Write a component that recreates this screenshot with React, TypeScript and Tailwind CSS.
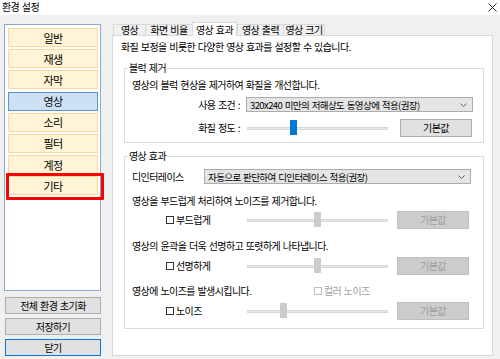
import React from 'react';

const navItems = ['일반', '재생', '자막', '영상', '소리', '필터', '계정', '기타'];
const tabs = [
  { label: '영상', w: 'w-[32px]' },
  { label: '화면 비율', w: 'w-[47px]' },
  { label: '영상 효과', w: 'w-[45px]', active: true },
  { label: '영상 출력', w: 'w-[46px]' },
  { label: '영상 크기', w: 'w-[42px]' },
];

function Chevron() {
  return (
    <svg width="7" height="4" viewBox="0 0 7 4" fill="none">
      <path d="M0.5 0.5 L3.5 3.5 L6.5 0.5" stroke="#606060" strokeWidth="1" />
    </svg>
  );
}

function Combo({ text, width }: { text: string; width: string }) {
  return (
    <div className={`${width} h-[15px] bg-[#e5e5e5] border border-[#acacac] flex items-center justify-between pl-[3px] pr-[5px]`}>
      <span className="text-[9.5px] tracking-[-0.6px]">{text}</span>
      <Chevron />
    </div>
  );
}

function Slider({ pos, disabled }: { pos: number; disabled?: boolean }) {
  return (
    <div className="relative w-[141px] h-[18px] flex items-center">
      <div className="w-full h-[3px] bg-[#e7eaea] border border-[#d6d6d6]" />
      <div
        className={`absolute top-[1px] w-[7px] h-[15px] ${disabled ? 'bg-[#cccccc]' : 'bg-[#0078d7]'}`}
        style={{ left: pos }}
      />
    </div>
  );
}

function DefaultButton({ disabled, ml }: { disabled?: boolean; ml: string }) {
  return (
    <div
      className={`${ml} w-[72px] h-[18px] flex items-center justify-center border ${
        disabled ? 'bg-[#cccccc] border-[#bfbfbf] text-[#9d9d9d]' : 'bg-[#e1e1e1] border-[#adadad]'
      }`}
    >
      기본값
    </div>
  );
}

function Check({ label, disabled }: { label: string; disabled?: boolean }) {
  return (
    <div className={`flex items-center ${disabled ? 'text-[#a0a0a0]' : ''}`}>
      <div className={`w-[8px] h-[8px] bg-white border ${disabled ? 'border-[#bcbcbc]' : 'border-[#333333]'}`} />
      <span className="ml-[2px]">{label}</span>
    </div>
  );
}

function EffectRow({ label, pos }: { label: string; pos: number }) {
  return (
    <div className="flex items-center h-[18px]">
      <div className="w-[122px] pl-[41px]">
        <Check label={label} />
      </div>
      <Slider pos={pos} disabled />
      <DefaultButton disabled ml="ml-[9px]" />
    </div>
  );
}

function GroupBox({ title, className, children }: { title: string; className: string; children: React.ReactNode }) {
  return (
    <div className={`relative ml-[11px] w-[360px] border border-[#dcdcdc] ${className}`}>
      <span className="absolute left-[3px] top-[-8px] bg-white px-[1px] leading-[14px]">{title}</span>
      {children}
    </div>
  );
}

export default function App() {
  return (
    <div className="w-[500px] h-[359px] bg-[#f0f0f0] overflow-hidden text-black font-['Noto_Sans_CJK_KR','Noto_Sans',sans-serif] text-[10px] tracking-[-0.6px] [word-spacing:1px] leading-[14px]">
      <div className="h-[15px] bg-white flex items-start justify-between pl-[2px] pr-[3px]">
        <span className="leading-[12px] mt-[1px]">환경 설정</span>
        <svg width="9" height="9" viewBox="0 0 9 9" className="mt-[3px]">
          <path d="M0.5 0.5 L8.5 8.5 M8.5 0.5 L0.5 8.5" stroke="#222" strokeWidth="1" />
        </svg>
      </div>

      <div className="flex items-start pt-[7px]">
        {/* left navigation */}
        <div className="ml-[4px] w-[97px] mt-[2px]">
          <div className="h-[267px] bg-white border border-[#8fa9cc] pt-[3px] pl-[3px] pr-[2px] flex flex-col gap-[2.2px]">
            {navItems.map((item) => (
              <div key={item} className="relative">
                <div
                  className={`h-[19px] flex items-center justify-center border text-[11px] ${
                    item === '영상' ? 'bg-[#cce0f6] border-[#5e93d2]' : 'bg-[#fff4d6] border-[#fbd99e]'
                  }`}
                >
                  {item}
                </div>
                {item === '기타' && (
                  <div className="absolute left-[-2px] right-[-6px] top-[-3px] bottom-[-5px] border-[3px] border-[#ff0000] rounded-[1px]" />
                )}
              </div>
            ))}
          </div>
          <div className="ml-[1px] w-[96px] mt-[6px] flex flex-col gap-[4px]">
            <div className="h-[17px] flex items-center justify-center bg-[#e1e1e1] border border-[#adadad]">전체 환경 초기화</div>
            <div className="h-[17px] flex items-center justify-center bg-[#e1e1e1] border border-[#adadad]">저장하기</div>
            <div className="h-[17px] flex items-center justify-center bg-[#e1e1e1] border border-[#0078d7]">닫기</div>
          </div>
        </div>

        {/* right tab panel */}
        <div className="ml-[11px] w-[381px]">
          <div className="flex items-end h-[13px] pl-[1px]">
            {tabs.map((t, i) =>
              t.active ? (
                <div
                  key={t.label}
                  className={`${t.w} h-[14px] mb-[-1px] relative z-10 bg-white border border-b-0 border-[#d9d9d9] flex items-center justify-center`}
                >
                  {t.label}
                </div>
              ) : (
                <div
                  key={t.label}
                  className={`${t.w} h-[11px] bg-[#f0f0f0] border-t border-l border-[#d9d9d9] ${
                    i === tabs.length - 1 ? 'border-r' : ''
                  } flex items-center justify-center`}
                >
                  {t.label}
                </div>
              )
            )}
          </div>
          <div className="h-[321px] bg-white border border-[#d9d9d9] pt-[4px]">
            <div className="pl-[8px]">화질 보정을 비롯한 다양한 영상 효과를 설정할 수 있습니다.</div>

            <GroupBox title="블럭 제거" className="mt-[14px] pt-[9px] pb-[5px]">
              <div className="pl-[7px]">영상의 블럭 현상을 제거하여 화질을 개선합니다.</div>
              <div className="flex items-center h-[15px] mt-[5px] pl-[7px]">
                <div className="w-[108px] text-right">사용 조건 :</div>
                <div className="ml-[6px]">
                  <Combo text="320x240 미만의 저해상도 동영상에 적용(권장)" width="w-[227px]" />
                </div>
              </div>
              <div className="flex items-center h-[18px] mt-[7px] pl-[7px]">
                <div className="w-[108px] text-right">화질 정도 :</div>
                <div className="ml-[7px]">
                  <Slider pos={43} />
                </div>
                <DefaultButton ml="ml-[12px]" />
              </div>
            </GroupBox>

            <GroupBox title="영상 효과" className="mt-[13px] pt-[12px] pb-[8px]">
              <div className="flex items-center h-[15px] pl-[7px]">
                <div className="w-[72px]">디인터레이스</div>
                <Combo text="자동으로 판단하여 디인터레이스 적용(권장)" width="w-[267px]" />
              </div>
              <div className="pl-[7px] mt-[10px]">영상을 부드럽게 처리하여 노이즈를 제거합니다.</div>
              <div className="mt-[3px]">
                <EffectRow label="부드럽게" pos={67} />
              </div>
              <div className="pl-[7px] mt-[10px]">영상의 윤곽을 더욱 선명하고 또렷하게 나타냅니다.</div>
              <div className="mt-[4px]">
                <EffectRow label="선명하게" pos={67} />
              </div>
              <div className="flex items-center pl-[7px] mt-[9px]">
                <div className="w-[182px]">영상에 노이즈를 발생시킵니다.</div>
                <Check label="컬러 노이즈" disabled />
              </div>
              <div className="mt-[4px]">
                <EffectRow label="노이즈" pos={33} />
              </div>
            </GroupBox>
          </div>
        </div>
      </div>
    </div>
  );
}
